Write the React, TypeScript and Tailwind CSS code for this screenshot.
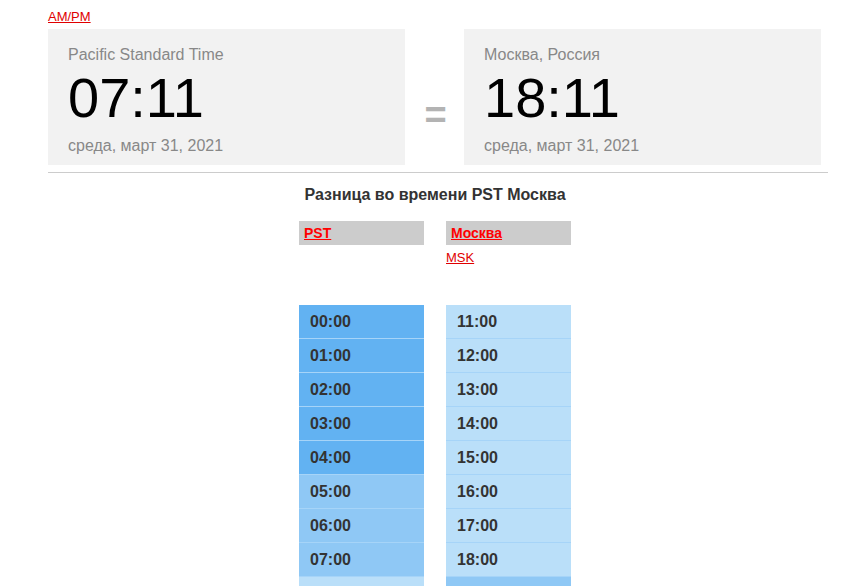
const pst = Array.from({ length: 24 }, (_, i) => i)

const pad = (n: number) => (n < 10 ? '0' + n : '' + n) + ':00'

const rowColor = (h: number) => {
    if (h < 5) return 'bg-[#62b2f2]'
    if (h < 8) return 'bg-[#8fc8f5]'
    if (h < 19) return 'bg-[#badff9]'
    return 'bg-[#8fc8f5]'
}

const TimeCard = ({ label, time }: { label: string; time: string }) => {
    return (
        <div className="w-[357px] h-[136px] bg-[#f2f2f2] pt-[16px] px-[20px]">
            <div className="text-[16px] leading-[20px] text-[#888]">{label}</div>
            <div className="mt-[5px] text-[56px] leading-[56px] text-black">{time}</div>
            <div className="mt-[10px] text-[16px] leading-[20px] text-[#888]">среда, март 31, 2021</div>
        </div>
    )
}

const Column = ({ title, sub, offset }: { title: string; sub?: string; offset: number }) => {
    return (
        <div className="w-[125px] flex flex-col">
            <div className="h-[24px] bg-[#cccccc] px-[5px] leading-[24px] text-[14px] font-bold">
                <a href="#" className="text-[#ff0000] underline">{title}</a>
            </div>
            <div className="h-[60px] pt-[5px] text-[13px] leading-[16px]">
                {sub && <a href="#" className="text-[#e00000] underline">{sub}</a>}
            </div>
            {pst.map((h) => {
                const v = (h + offset) % 24
                return (
                    <div key={h} className={`h-[34px] border-b border-[#a6d4f8] pl-[11px] pt-[1px] flex items-center text-[16px] font-bold text-[#333] ${rowColor(v)}`}>
                        {pad(v)}
                    </div>
                )
            })}
        </div>
    )
}

export default function App() {
    return (
        <div className="w-[860px] min-h-[586px] bg-white pl-[48px] font-['Liberation_Sans',Arial,sans-serif]">
            <div className="pt-[9px] h-[29px] text-[13px] leading-[16px]">
                <a href="#" className="text-[#e00000] underline">AM/PM</a>
            </div>
            <div className="flex">
                <TimeCard label="Pacific Standard Time" time="07:11" />
                <div className="w-[59px] text-center pt-[67px] pl-[2px] text-[38px] leading-[38px] font-bold text-[#b3b3b3]">=</div>
                <TimeCard label="Москва, Россия" time="18:11" />
            </div>
            <div className="w-[780px] mt-[7px] border-t border-[#cccccc]"></div>
            <div className="w-[774px] flex flex-col items-center">
                <div className="mt-[12px] text-[16px] leading-[20px] font-bold text-[#333]">Разница во времени PST Москва</div>
                <div className="mt-[16px] flex gap-[22px]">
                    <Column title="PST" offset={0} />
                    <Column title="Москва" sub="MSK" offset={11} />
                </div>
            </div>
        </div>
    )
}
